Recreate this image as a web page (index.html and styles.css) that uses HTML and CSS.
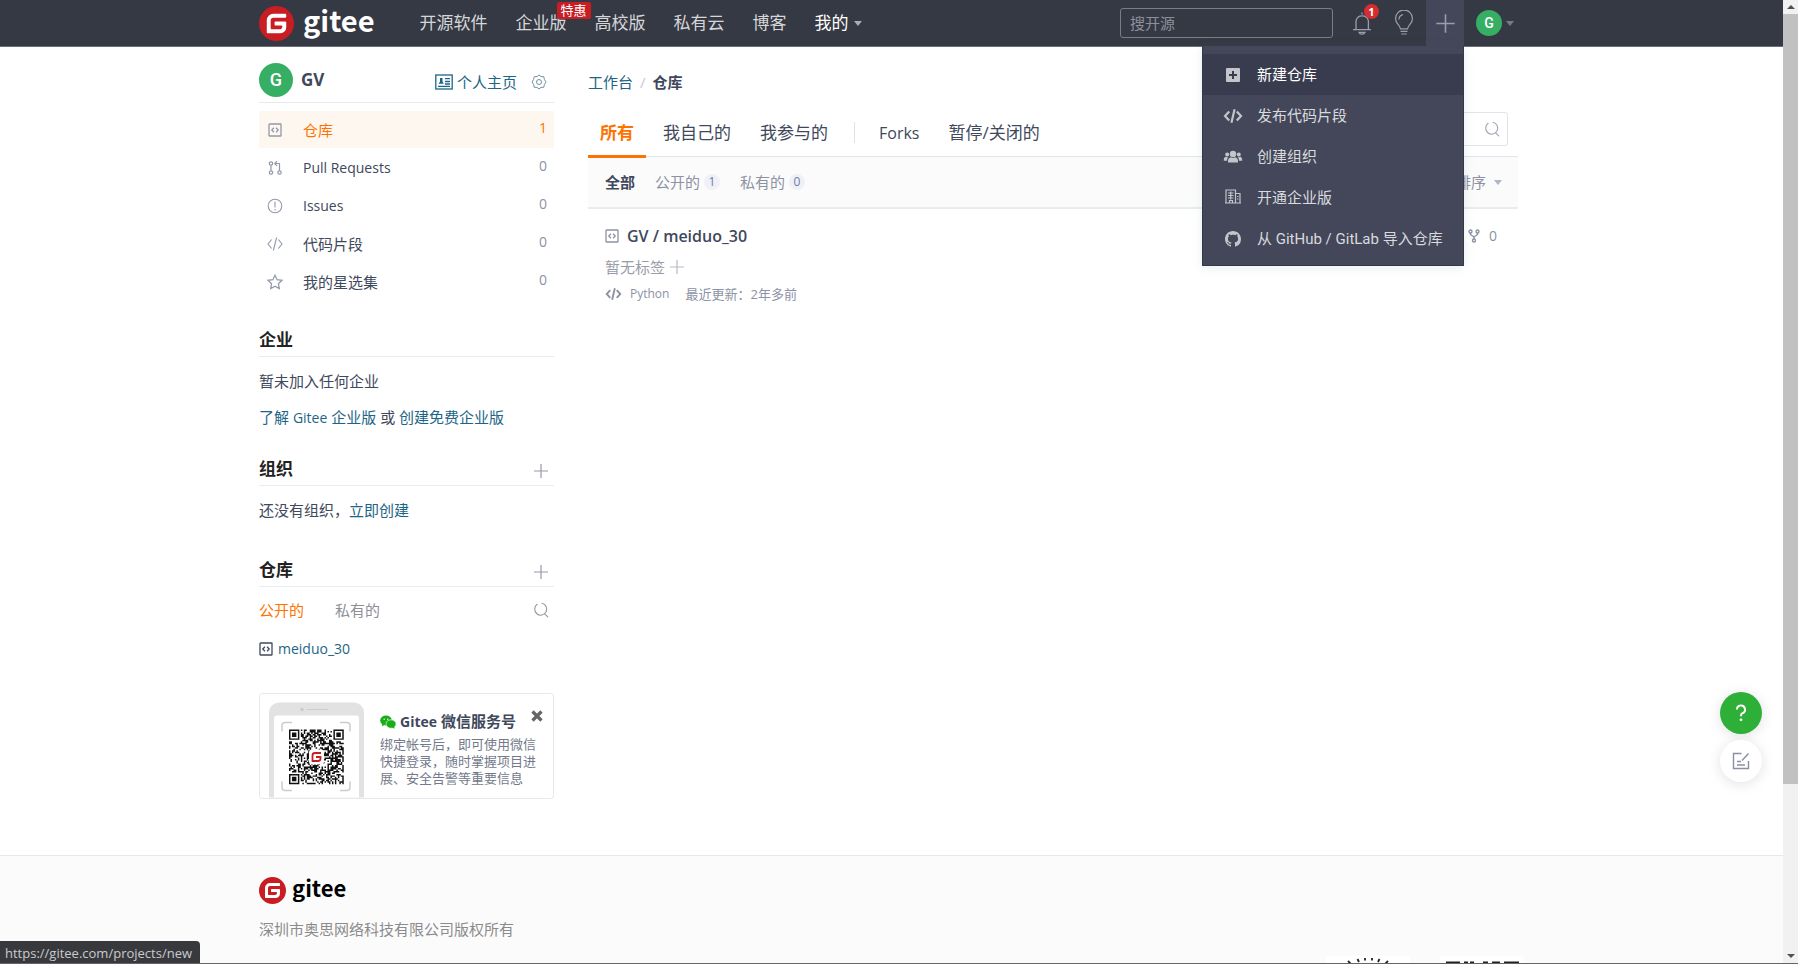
FILE: index.html
```html
<!DOCTYPE html>
<html lang="zh-CN">
<head>
<meta charset="utf-8">
<title>仓库 - Gitee</title>
<link rel="stylesheet" href="styles.css">
</head>
<body>
<svg class="defs" aria-hidden="true">
  <symbol id="i-gitee" viewBox="0 0 24 24"><rect x="4" y="4" width="16" height="16" fill="#fff"/><path fill="#c71d23" d="M11.984 0A12 12 0 0 0 0 12a12 12 0 0 0 12 12 12 12 0 0 0 12-12A12 12 0 0 0 12 0a12 12 0 0 0-.016 0zm6.09 5.333c.328 0 .593.266.592.593v1.482a.594.594 0 0 1-.593.592H9.777c-.982 0-1.778.796-1.778 1.778v5.63c0 .327.266.592.593.592h5.63c.982 0 1.778-.796 1.778-1.778v-.296a.593.593 0 0 0-.592-.593h-4.15a.592.592 0 0 1-.592-.592v-1.482a.593.593 0 0 1 .593-.592h6.815c.327 0 .593.265.593.592v3.408a4 4 0 0 1-4 4H5.926a.593.593 0 0 1-.593-.593V9.778a4.444 4.444 0 0 1 4.445-4.444h8.296Z"/></symbol>
  <symbol id="i-repo" viewBox="0 0 14 14"><g fill="none" stroke="currentColor"><rect x="1" y="1" width="12" height="12" rx="0.6" stroke-width="1.3"/><path d="M5.9 4.7 3.8 7l2.1 2.3M8.1 4.7 10.2 7 8.1 9.3" stroke-width="1.3"/></g></symbol>
  <symbol id="i-search" viewBox="0 0 16 16"><g fill="none" stroke="currentColor" stroke-width="1.1" stroke-linecap="round"><path d="M4.200 2.300A6 6 0 1 0 9 1.300"/><path d="m11.600 11.800 3.200 3"/></g></symbol>
  <symbol id="i-plus" viewBox="0 0 16 16"><path d="M8 1v14M1 8h14" fill="none" stroke="currentColor" stroke-width="1.2"/></symbol>
  <symbol id="i-code" viewBox="0 0 20 16"><path d="M6.200 3.400 2 8l4.200 4.600M13.800 3.400 18 8l-4.200 4.600M11.600 1.200 8.400 14.800" fill="none" stroke="currentColor" stroke-width="2.2"/></symbol>
</svg>

<div class="page">
  <div class="view">
    <header class="topbar">
      <div class="container topbar-row">
        <a class="brand" href="#"><svg class="brand-mark"><use href="#i-gitee"/></svg><span>gitee</span></a>
        <nav class="nav">
          <a href="#">开源软件</a>
          <a href="#" class="has-tag">企业版<span class="tag">特惠</span></a>
          <a href="#">高校版</a>
          <a href="#">私有云</a>
          <a href="#">博客</a>
          <button type="button" class="nav-mine">我的<i class="caret"></i></button>
        </nav>
        <div class="tools">
          <input class="top-search" type="text" placeholder="搜开源" aria-label="搜开源">
          <button type="button" class="tool bell" aria-label="通知">
            <svg viewBox="0 0 22 26"><g fill="none" stroke="currentColor" stroke-width="1.3"><path d="M5 19.500V11a6.300 6.300 0 0 1 12.400 0v8.500M2 19.600h18M11 4.500V2.500"/><path d="M8 22.300c.6 2.400 5.400 2.400 6 0z"/></g></svg>
            <span class="count">1</span>
          </button>
          <button type="button" class="tool bulb" aria-label="动态">
            <svg viewBox="0 0 22 26"><g fill="none" stroke="currentColor" stroke-width="1.200"><path d="M7.500 18.800c-.4-2-1.200-3-2.700-4.700a8.400 8.400 0 1 1 12.400 0c-1.500 1.700-2.300 2.700-2.700 4.700z"/><path d="M6 9.500a5 5 0 0 1 4-4.800M7.500 21.300h7M8.300 24h5.400"/></g></svg>
          </button>
          <div class="create">
            <button type="button" class="create-btn" aria-label="新建"><svg><use href="#i-plus"/></svg></button>
            <ul class="menu">
              <li><a href="#" class="current"><svg viewBox="0 0 20 20"><path fill="currentColor" fill-rule="evenodd" d="M4 3h12a1 1 0 0 1 1 1v12a1 1 0 0 1-1 1H4a1 1 0 0 1-1-1V4a1 1 0 0 1 1-1zm5 3v3H6v2h3v3h2v-3h3V9h-3V6z"/></svg>新建仓库</a></li>
              <li><a href="#"><svg><use href="#i-code"/></svg>发布代码片段</a></li>
              <li><a href="#"><svg viewBox="0 0 20 20"><g fill="currentColor"><circle cx="10" cy="7" r="3.200"/><path d="M5 15.500c-.4-3.300 1-5 3-5.200 1.200.8 2.800.8 4 0 2 .2 3.400 1.900 3 5.200z"/><circle cx="4.200" cy="7.600" r="2"/><circle cx="15.800" cy="7.600" r="2"/><path d="M.8 13.800c-.2-2.300.5-3.800 1.900-4 .9.500 1.900.5 2.800.1-1 1-1.500 2.200-1.500 3.900zM19.200 13.800c.2-2.300-.5-3.800-1.900-4-.9.500-1.900.5-2.800.1 1 1 1.500 2.200 1.500 3.900z"/></g></svg>创建组织</a></li>
              <li><a href="#"><svg viewBox="0 0 20 20"><g fill="none" stroke="currentColor" stroke-width="1.200"><path d="M3 15V2h9.500v13M12.500 5.500H17V15M2 15h16M5 5h5.500M5 7.500h5.500M5 10h5.500M6.500 15v-2.500h3V15M7.700 3.500v8M14 8.500h1.500M14 11h1.500"/></g></svg>开通企业版</a></li>
              <li><a href="#"><svg viewBox="-2 -2 20 20"><path fill="currentColor" d="M8 0C3.580 0 0 3.580 0 8c0 3.540 2.290 6.530 5.470 7.590.4.070.55-.17.55-.38 0-.19-.01-.82-.01-1.490-2.010.37-2.530-.49-2.690-.94-.09-.23-.48-.94-.82-1.130-.28-.15-.68-.52-.01-.53.63-.01 1.080.58 1.230.82.72 1.210 1.870.87 2.330.66.07-.52.28-.87.51-1.070-1.780-.2-3.640-.89-3.640-3.950 0-.87.31-1.590.82-2.150-.08-.2-.36-1.020.08-2.120 0 0 .67-.21 2.200.82.64-.18 1.320-.27 2-.27s1.360.09 2 .27c1.530-1.040 2.200-.82 2.200-.82.44 1.100.16 1.920.08 2.120.51.560.82 1.270.82 2.150 0 3.070-1.870 3.750-3.650 3.950.29.250.54.730.54 1.480 0 1.070-.01 1.930-.01 2.200 0 .21.15.46.55.38A8 8 0 0 0 16 8c0-4.420-3.580-8-8-8z"/></svg>从 GitHub / GitLab 导入仓库</a></li>
            </ul>
          </div>
          <button type="button" class="user" aria-label="账户"><span class="avatar avatar-sm">G</span><i class="caret"></i></button>
        </div>
      </div>
    </header>

    <div class="container body-row">
      <aside class="side">
        <div class="profile">
          <span class="avatar">G</span><strong>GV</strong>
          <a href="#" class="home"><svg viewBox="0 0 18 16"><g fill="none" stroke="currentColor" stroke-width="1.300"><rect x=".8" y="1" width="16.400" height="14"/><path d="M10 4.700h5M10 7.500h5M10 10h5M3 12.300h12"/></g><path fill="currentColor" d="M5 4h2.500v3.500l1.300 2.200H3.600L5 7.500z"/></svg>个人主页</a>
          <a href="#" class="gear" aria-label="设置"><svg viewBox="0 0 16 16"><g fill="none" stroke="currentColor" stroke-linejoin="round"><path d="M6 2.600 8 1l2 1.600 2.800.1.600 2.800L15 8l-1.600 2.500-.6 2.800-2.800.1L8 15l-2-1.600-2.800-.1-.6-2.800L1 8l1.600-2.500.6-2.800z"/><circle cx="8" cy="8" r="2.500"/></g></svg></a>
        </div>
        <ul class="side-menu">
          <li><a href="#" class="active"><svg class="i14"><use href="#i-repo"/></svg><span>仓库</span><b>1</b></a></li>
          <li><a href="#"><svg viewBox="0 0 16 16"><g fill="none" stroke="currentColor" stroke-width="1.200"><circle cx="4" cy="3.500" r="1.700"/><circle cx="4" cy="12.500" r="1.700"/><circle cx="12.500" cy="12.500" r="1.700"/><path d="M4 5.200v5.600M12.500 10.800V3.500H8M10 1.200 7.700 3.500 10 5.800"/></g></svg><span class="latin">Pull Requests</span><b>0</b></a></li>
          <li><a href="#"><svg viewBox="0 0 16 16"><g fill="none" stroke="currentColor" stroke-width="1.100"><circle cx="8" cy="8" r="6.800"/><path d="M8 3.500v6M8 11v1.500"/></g></svg><span class="latin">Issues</span><b>0</b></a></li>
          <li><a href="#"><svg viewBox="0 0 16 16"><path d="M4.600 3.500 1 8l3.600 4.500M11.400 3.500 15 8l-3.600 4.500M9.600 1.500 6.400 14.500" fill="none" stroke="currentColor" stroke-width="1.100"/></svg><span>代码片段</span><b>0</b></a></li>
          <li><a href="#"><svg viewBox="0 0 16 16"><path d="m8 1.200 2.100 4.500 4.900.6-3.600 3.400.9 4.900L8 12.200l-4.300 2.400.9-4.900L1 6.300l4.900-.6z" fill="none" stroke="currentColor" stroke-width="1.200"/></svg><span>我的星选集</span><b>0</b></a></li>
        </ul>

        <section class="block block-first">
          <h3>企业</h3>
          <p>暂未加入任何企业</p>
          <p><a href="#">了解 <span class="latin">Gitee</span> 企业版</a> 或 <a href="#">创建免费企业版</a></p>
        </section>
        <section class="block">
          <h3>组织<button type="button" aria-label="创建组织"><svg class="i16"><use href="#i-plus"/></svg></button></h3>
          <p>还没有组织，<a href="#">立即创建</a></p>
        </section>
        <section class="block block-repos">
          <h3>仓库<button type="button" aria-label="新建仓库"><svg class="i16"><use href="#i-plus"/></svg></button></h3>
          <div class="mini-tabs">
            <a href="#" class="on">公开的</a><a href="#">私有的</a>
            <button type="button" aria-label="搜索仓库"><svg class="i16"><use href="#i-search"/></svg></button>
          </div>
          <a href="#" class="mini-repo latin"><svg class="i14"><use href="#i-repo"/></svg>meiduo_30</a>
        </section>

        <div class="wechat">
          <svg class="phone" viewBox="0 0 95 95" role="img" aria-label="微信服务号二维码">
            <path fill="#e2e2e2" d="M0 95V10A10 10 0 0 1 10 0h75a10 10 0 0 1 10 10v85z"/>
            <path fill="#fff" d="M5 95V16a3 3 0 0 1 3-3h79a3 3 0 0 1 3 3v79z"/>
            <circle cx="33" cy="7" r="1.800" fill="#ccc"/><path d="M38 7h21" stroke="#ccc"/>
            <path d="M13 29v-6a3 3 0 0 1 3-3h7M71 20h7a3 3 0 0 1 3 3v6M81 79v6a3 3 0 0 1-3 3h-7M23 88h-7a3 3 0 0 1-3-3v-6" fill="none" stroke="#ccc" stroke-width="1.500"/>
            <path id="qr" fill="#111" transform="translate(20 27) scale(1.480)"/>
            <rect x="40" y="47" width="15" height="15" rx="3" fill="#fff"/>
            <path d="M52 50.500h-6q-2.500 0-2.500 2.500v5.500h5.500q2.500 0 2.500-2.500v-1.500h-4.500" fill="none" stroke="#c71d23" stroke-width="1.800"/>
          </svg>
          <div class="wechat-text">
            <h4><svg viewBox="0 0 16 14"><g fill="#1aad19"><ellipse cx="6" cy="5.500" rx="5.800" ry="4.900"/><path d="m2.500 8-.7 3.200L5 9.800z"/><ellipse cx="11" cy="9" rx="5" ry="4.200" stroke="#fff" stroke-width=".6"/><path d="m12 12.500 2.500 1.300-.4-2.500z"/></g><g fill="#fff"><circle cx="4.200" cy="4.200" r=".7"/><circle cx="7.800" cy="4.200" r=".7"/></g></svg><span><span class="latin">Gitee</span> 微信服务号</span></h4>
            <p>绑定帐号后，即可使用微信快捷登录，随时掌握项目进展、安全告警等重要信息</p>
          </div>
          <button type="button" class="close" aria-label="关闭"><svg viewBox="0 0 12 12"><path d="m1.500 1.500 9 9M10.500 1.500l-9 9" stroke="currentColor" stroke-width="3.200"/></svg></button>
        </div>
      </aside>

      <main class="main">
        <div class="crumbs"><a href="#">工作台</a><i>/</i><strong>仓库</strong></div>
        <div class="tabs">
          <a href="#" class="on">所有</a><a href="#">我自己的</a><a href="#">我参与的</a><span class="sep"></span><a href="#" class="forks-tab">Forks</a><a href="#">暂停/关闭的</a>
          <div class="repo-search"><input type="text" aria-label="搜索仓库"><svg class="i16"><use href="#i-search"/></svg></div>
        </div>
        <div class="filter">
          <a href="#" class="on">全部</a>
          <a href="#">公开的<b>1</b></a>
          <a href="#">私有的<b>0</b></a>
          <button type="button">排序<i class="caret"></i></button>
        </div>
        <article class="repo">
          <div class="repo-head">
            <svg class="i14"><use href="#i-repo"/></svg><a href="#">GV / meiduo_30</a>
            <span class="forks"><svg viewBox="0 0 12 14"><g fill="none" stroke="currentColor" stroke-width="1.400"><circle cx="2.500" cy="2.500" r="1.500"/><circle cx="9.500" cy="2.500" r="1.500"/><circle cx="6" cy="11.500" r="1.500"/><path d="M2.500 4v1.500L6 8l3.500-2.500V4M6 8v2"/></g></svg>0</span>
          </div>
          <div class="repo-tags">暂无标签<svg class="i16"><use href="#i-plus"/></svg></div>
          <div class="repo-meta"><svg><use href="#i-code"/></svg><span class="lang">Python</span><span>最近更新：2年多前</span></div>
        </article>
      </main>
    </div>

    <footer class="footer">
      <div class="container footer-row">
        <div>
          <a class="foot-brand" href="#"><svg><use href="#i-gitee"/></svg><span>gitee</span></a>
          <p>深圳市奥思网络科技有限公司版权所有</p>
        </div>
        <div class="partners">
          <svg viewBox="0 0 84 84"><rect width="84" height="84" fill="#fff"/><path d="m25 8-3-3M33 6l-1.500-3M39 4.500V2M46 4.500V2M52 6l1.500-3M59 8l3-3" stroke="#222" stroke-width="1.800"/></svg>
          <svg viewBox="0 0 84 84"><rect width="84" height="84" fill="#fff"/><path d="M6 7h14M24 7h4M30 7h4M43 7h5M52 7h8M64 7h15" stroke="#222" stroke-width="3"/></svg>
        </div>
      </div>
    </footer>

    <div class="floaters">
      <button type="button" class="help" aria-label="帮助"><svg viewBox="0 0 20 20"><path d="M6 6.500a4 4 0 1 1 5.500 3.700c-1.100.5-1.500 1-1.500 2.300v.7" fill="none" stroke="#fff" stroke-width="2"/><circle cx="10" cy="16.800" r="1.400" fill="#fff"/></svg></button>
      <button type="button" class="feedback" aria-label="反馈"><svg viewBox="0 0 18 18"><path d="M9.500 1.500h-8v15h15V9M16.500 1.500l-6.500 7M5 9.500h4M5 13h8" fill="none" stroke="currentColor" stroke-width="1.400"/></svg></button>
    </div>
    <div class="status">https://gitee.com/projects/new</div>
  </div>
  <div class="scroll" aria-hidden="true"><i class="up"></i><i class="thumb"></i><i class="down"></i></div>
</div>
<script src="qr.js"></script>
</body>
</html>
```
FILE: styles.css
```css
* { box-sizing: border-box; }
body { margin: 0; font: 15px/24px "Open Sans", "Noto Sans CJK SC", sans-serif; color: #40485b; background: #fff; }
h3, h4, p, ul { margin: 0; padding: 0; }
ul { list-style: none; }
a { color: #1d6586; text-decoration: none; }
button { border: 0; padding: 0; background: none; font: inherit; color: inherit; cursor: pointer; }
i { font-style: normal; }
svg { display: block; flex: none; }
.defs { position: absolute; width: 0; height: 0; }
.i14 { width: 14px; height: 14px; }
.i16 { width: 16px; height: 16px; }
.latin { font-size: 14px; }
.caret { border: 4px solid transparent; border-top: 5px solid currentColor; border-bottom: 0; }

.page { display: grid; grid-template-columns: 1fr 15px; height: 100vh; overflow: hidden; border-bottom: 1px solid #65666a; }
.view { display: flex; flex-direction: column; min-width: 0; overflow: hidden; }
.container { width: 100%; max-width: 1265px; margin: 0 auto; padding-right: 6px; }

.topbar { flex: none; background: #353944; border-bottom: 1px solid #6b6e78; }
.topbar-row { display: flex; align-items: center; height: 46px; }
.brand { display: flex; align-items: center; gap: 9px; color: #fff; font: bold 29px/38px "Noto Sans CJK SC", sans-serif; }
.brand span { padding-bottom: 8px; }
.brand-mark { width: 35px; height: 35px; }
.nav { display: flex; gap: 28px; margin-left: 45px; font-size: 17px; }
.nav a { color: #d5d6d9; }
.has-tag { position: relative; }
.tag { position: absolute; left: 41px; top: -9px; width: 34px; border-radius: 2px; background: #c71d23; color: #fff; font-size: 13px; line-height: 17px; text-align: center; }
.nav-mine { display: flex; align-items: center; gap: 5px; color: #fff; }
.nav-mine .caret { color: #a9acb4; }
.tools { display: flex; align-items: center; margin-left: auto; padding-right: 4px; color: #9a9eac; }
.top-search { width: 213px; height: 30px; padding: 0 9px; border: 1px solid #7a7d88; border-radius: 3px; background: transparent; color: #fff; font: inherit; }
.top-search::placeholder { color: #8c909c; opacity: 1; }
.tool { position: relative; }
.tool svg { width: 22px; height: 26px; }
.bell { margin-left: 18px; }
.bulb { margin-left: 20px; }
.count { position: absolute; left: 13px; top: -6px; width: 15px; border-radius: 8px; background: #d52d30; color: #fff; font-size: 11px; font-weight: bold; line-height: 15px; }
.create { position: relative; margin-left: 11px; }
.create-btn { display: grid; place-items: center; width: 38px; height: 46px; background: #434759; }
.create-btn svg { width: 21px; height: 21px; }
.menu { position: absolute; z-index: 5; top: 46px; right: 0; width: 262px; padding: 8px 0 6px; border: 1px solid #353944; border-top: 0; background: #434759; box-shadow: 0 2px 10px rgba(60, 120, 140, .12); }
.menu a { display: flex; align-items: center; gap: 14px; height: 41px; padding-left: 20px; color: #d9dade; white-space: nowrap; font-family: Roboto, "Noto Sans CJK SC", sans-serif; }
.menu .current { background: #383c4e; color: #fff; }
.menu svg { width: 20px; height: 20px; color: #c3c5cb; }
.avatar { display: grid; place-items: center; width: 34px; height: 34px; border-radius: 50%; background: #36ae63; color: #fff; font: 500 18px/1 Roboto, sans-serif; }
.avatar-sm { width: 26px; height: 26px; font-size: 14px; }
.user { display: flex; align-items: center; gap: 4px; margin-left: 12px; color: #777b87; }

.body-row { display: flex; gap: 34px; flex: none; }
.side { flex: 0 0 295px; }
.profile { display: flex; align-items: center; height: 56px; padding: 11px 7px 0 0; border-bottom: 1px solid #e8e9eb; }
.profile strong { margin-left: 8px; font-size: 17px; }
.home { display: flex; align-items: center; gap: 4px; margin-left: auto; padding-top: 4px; }
.home svg { width: 18px; height: 16px; }
.gear { margin-left: 14px; padding-top: 4px; color: #7391a3; }
.gear svg { width: 16px; height: 16px; }
.side-menu { margin-top: 8px; }
.side-menu a { display: grid; grid-template-columns: 16px 1fr auto; align-items: center; gap: 20px; height: 37px; padding: 0 7px 0 8px; color: #40485b; }
.side-menu li + li { padding-top: 1px; }
.side-menu svg { justify-self: center; color: #9299a9; }
.side-menu svg:not(.i14) { width: 16px; height: 16px; }
.side-menu b { padding-bottom: 3px; color: #8c92a4; font-weight: normal; font-size: 14px; }
.side-menu .active { background: #fef7f0; }
.side-menu .active span, .side-menu .active b { color: #fe7300; }
.block { margin-top: 27px; }
.block-first { margin-top: 28px; }
.block h3 { display: flex; justify-content: space-between; align-items: center; padding: 0 5px 4px 0; border-bottom: 1px solid #e6edf3; color: #222; font-size: 17px; line-height: 24px; }
.block h3 button { padding-top: 4px; color: #9a98a8; }
.block p { margin-top: 12px; }
.block-repos { margin-top: 36px; }
.mini-tabs { display: flex; align-items: center; gap: 31px; margin-top: 11px; padding-right: 5px; }
.mini-tabs a { color: #8c8f96; }
.mini-tabs .on { color: #fe7300; }
.mini-tabs button { margin-left: auto; color: #999; }
.mini-repo { display: flex; align-items: center; gap: 5px; margin-top: 15px; }
.mini-repo svg { color: #40485b; }
.wechat { display: flex; position: relative; align-items: flex-end; margin-top: 32px; padding: 8px 8px 0 9px; border: 1px solid #e6e9ec; border-radius: 3px; }
.phone { width: 95px; height: 96px; }
.wechat-text { flex: 1; align-self: flex-start; margin: 8px 4px 0 16px; white-space: nowrap; }
.wechat h4 { display: flex; align-items: center; gap: 4px; font-size: 15px; line-height: 22px; }
.wechat h4 svg { width: 16px; height: 14px; }
.wechat p { width: 156px; margin-top: 3px; color: #73798a; font-size: 13px; line-height: 17px; white-space: normal; }
.close { position: absolute; right: 10px; top: 16px; color: #666; }
.close svg { width: 12px; height: 12px; }

.main { flex: 1; min-width: 0; }
.crumbs { display: flex; gap: 7px; padding-top: 23px; }
.crumbs i { color: #c5c9d0; }
.tabs { display: flex; align-items: center; height: 49px; margin-top: 14px; border-bottom: 1px solid #e1e6ec; font-size: 17px; }
.tabs a { display: flex; align-items: center; align-self: stretch; margin: 0 5px -2px 0; padding: 2px 12px 0; border-bottom: 3px solid transparent; color: #40485b; }
.tabs .on { border-color: #fe7300; color: #fe7300; font-weight: bold; }
.tabs .forks-tab { font-size: 16px; }
.sep { width: 1px; height: 21px; margin: 0 12px 0 9px; background: #dfe3e9; }
.repo-search { display: flex; align-items: center; width: 240px; height: 34px; margin: 0 10px 6px auto; padding: 0 7px; border: 1px solid #e1e4ea; border-radius: 3px; color: #a2a4b4; }
.repo-search input { flex: 1; min-width: 0; border: 0; background: none; font: inherit; }
.filter { display: flex; align-items: center; gap: 20px; height: 52px; padding: 0 16px 0 17px; border-bottom: 2px solid #e9ebef; background: #fbfbfb; }
.filter a, .filter button { display: flex; align-items: center; gap: 4px; color: #8c92a4; }
.filter a.on { color: #40485b; font-weight: bold; }
.filter b { min-width: 16px; border-radius: 8px; background: #eff1f7; color: #6f7ba8; font-size: 12px; font-weight: normal; line-height: 16px; text-align: center; }
.filter button { gap: 8px; margin-left: auto; }
.filter .caret { color: #a9b8c8; }
.repo { padding: 15px 17px; color: #8c92a4; }
.repo-head { display: flex; align-items: center; gap: 8px; }
.repo-head a { color: #40485b; font-size: 16px; font-weight: 600; }
.forks { display: flex; align-items: center; gap: 9px; margin-left: auto; padding-right: 4px; font-size: 14px; }
.forks svg { width: 12px; height: 14px; }
.repo-tags { display: flex; align-items: center; gap: 4px; margin-top: 7px; color: #9a9da8; }
.repo-tags svg { color: #b8bac4; }
.repo-meta { display: flex; align-items: center; margin-top: 3px; font-size: 13px; }
.repo-meta svg { width: 17px; height: 14px; }
.repo-meta span { margin-left: 8px; }
.repo-meta .lang { font-size: 12px; }
.repo-meta span + span { margin-left: 16px; }

.footer { flex: 1 0 auto; margin-top: 56px; border-top: 1px solid #e4eae8; background: #fbfbfb; }
.footer-row { display: flex; justify-content: space-between; height: 160px; padding: 15px 0 0; }
.foot-brand { display: flex; align-items: center; gap: 6px; color: #000; font: bold 22px/33px "Noto Sans CJK SC", sans-serif; }
.foot-brand svg { width: 27px; height: 27px; }
.foot-brand span { padding-bottom: 5px; }
.footer p { margin-top: 8px; color: #8b8b8b; }
.partners { display: flex; gap: 30px; margin-top: 85px; }
.partners svg { width: 84px; height: 84px; }

.floaters { position: fixed; right: 36px; bottom: 182px; display: grid; gap: 6px; }
.floaters button { display: grid; place-items: center; width: 42px; height: 42px; border-radius: 50%; background: #fff; color: #8a90a3; box-shadow: 0 2px 14px rgba(0, 0, 0, .12); }
.floaters .help { background: #2eaf38; }
.help svg { width: 20px; height: 20px; }
.feedback svg { width: 18px; height: 18px; }
.status { position: fixed; left: 0; bottom: 1px; padding: 2px 8px 0 5px; border-radius: 0 4px 0 0; background: #38393d; color: #c9cbce; font: 13px/20px "Open Sans", sans-serif; }
.scroll { display: flex; flex-direction: column; align-items: center; background: #f1f1f1; }
.scroll .thumb { flex: 0 0 80%; width: 100%; background: #c1c1c1; }
.scroll .up, .scroll .down { border: 4px solid transparent; }
.scroll .up { margin: 1px 0 5px; border-bottom-color: #505050; }
.scroll .down { margin: auto 0 1px; border-top-color: #505050; }
```
FILE: qr.js
```js
// Fills the QR symbol: three finder squares plus data modules.
(function () {
  var n = 37, seed = 20477, d = '';
  function finder(x, y, ox, oy) {
    var dx = x - ox, dy = y - oy;
    if (dx < -1 || dy < -1 || dx > 7 || dy > 7) return null;
    var r = Math.max(Math.abs(dx - 3), Math.abs(dy - 3));
    return r === 3 || r < 2;
  }
  for (var y = 0; y < n; y++) {
    for (var x = 0; x < n; x++) {
      seed = (seed * 1103515245 + 12345) % 2147483648;
      var on = finder(x, y, 0, 0);
      if (on === null) on = finder(x, y, n - 7, 0);
      if (on === null) on = finder(x, y, 0, n - 7);
      if (on === null) on = seed / 2147483648 > 0.48;
      if (on) d += 'M' + x + ' ' + y + 'h1v1h-1z';
    }
  }
  document.getElementById('qr').setAttribute('d', d);
})();
```
